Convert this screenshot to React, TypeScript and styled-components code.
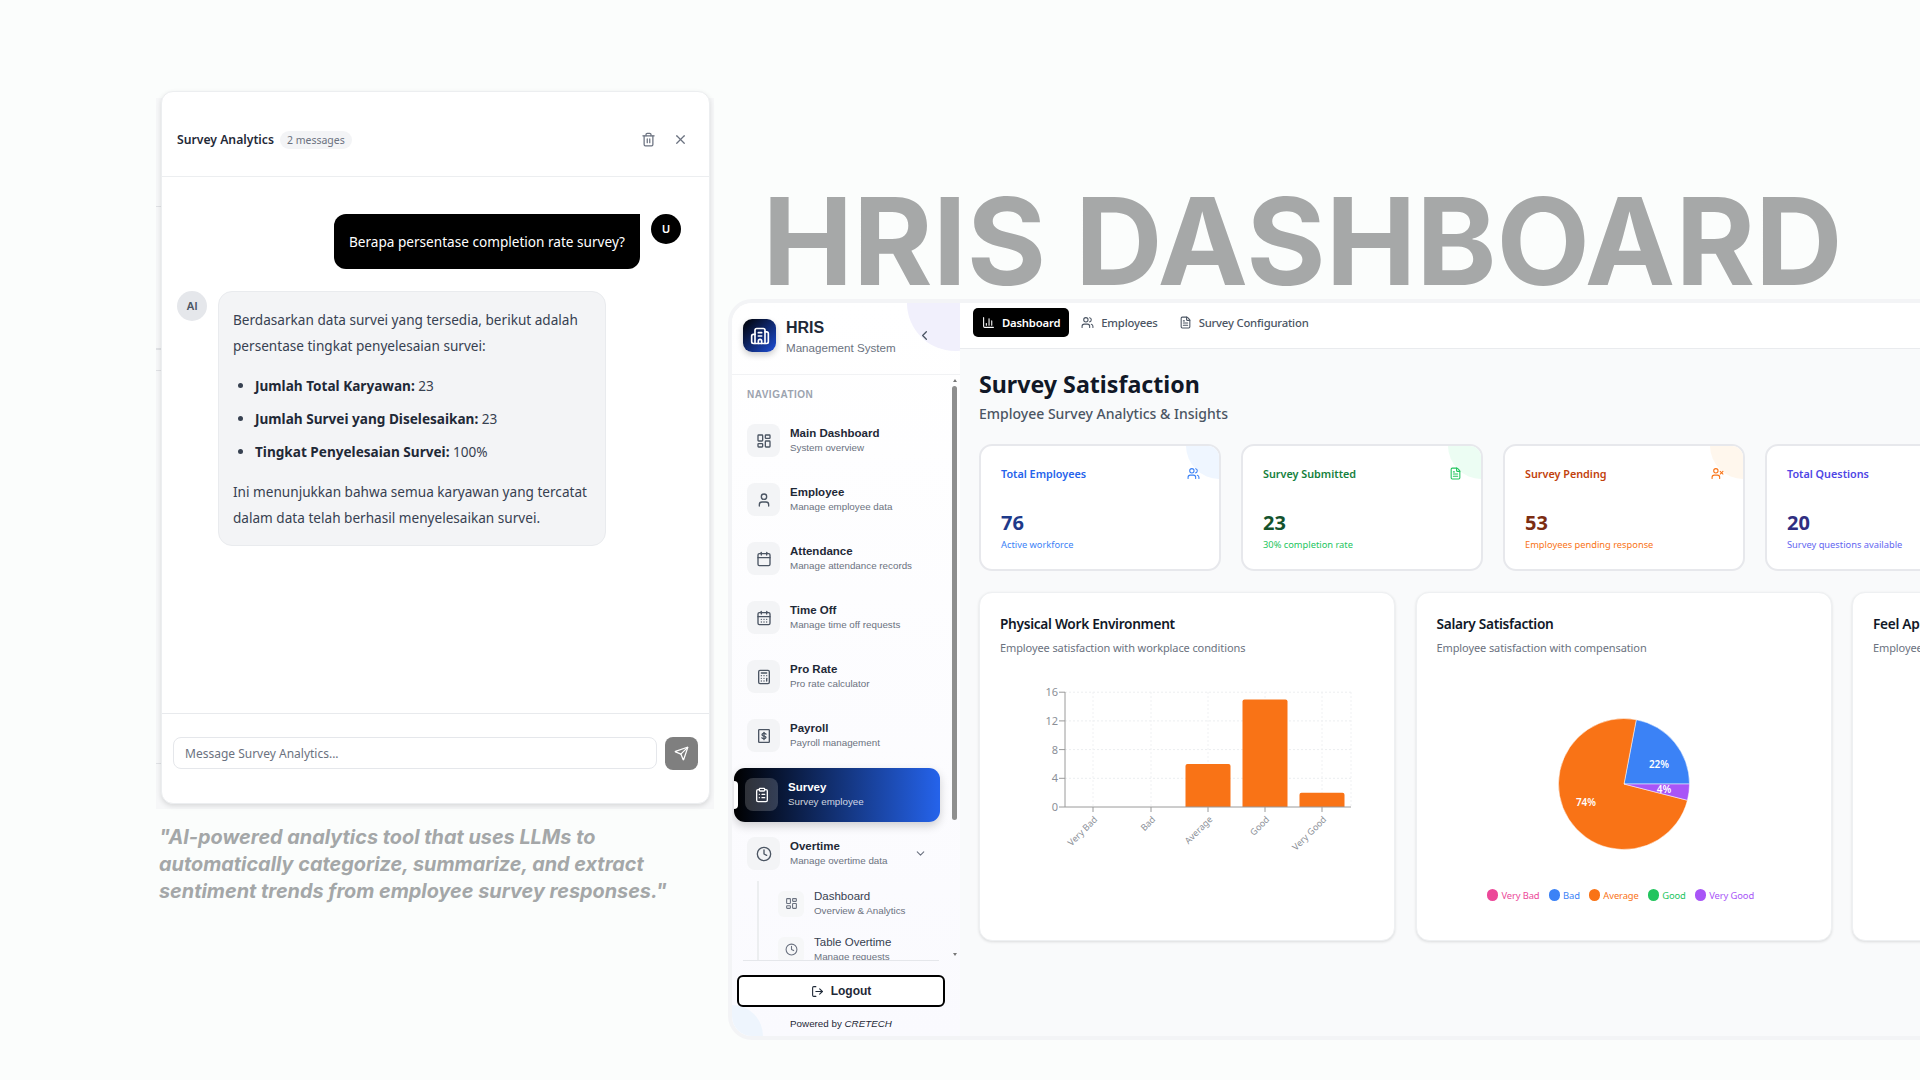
import React from "react";
import styled, { createGlobalStyle } from "styled-components";
import {
  ChartColumn, Users, FileText, UserX, Trash2, X, Send, LayoutDashboard, User, Calendar,
  CalendarDays, Calculator, ClipboardList, Clock, ChevronDown, ChevronLeft, LogOut, Building2,
} from "lucide-react";

const SEGOE = `"Noto Sans", "Open Sans", sans-serif`;
const ARIAL = `"Liberation Sans", Arial, sans-serif`;

const Global = createGlobalStyle`
  html, body { margin: 0; padding: 0; background: #fbfdfc; }
  * { box-sizing: border-box; }
`;

const Page = styled.div`
  width: 1920px;
  height: 1080px;
  overflow: hidden;
  background: #fbfdfc;
  display: flex;
  align-items: flex-start;
  padding-left: 161px;
  font-family: ${SEGOE};
`;

const LeftColumn = styled.div`
  width: 549px;
  flex: none;
  margin-top: 91px;
  display: flex;
  flex-direction: column;
`;

const ChatStage = styled.div`
  position: relative;
  &::before {
    content: "";
    position: absolute;
    left: -5px;
    right: -4px;
    top: 7px;
    bottom: -5px;
    background:
      linear-gradient(#dfe1e4, #dfe1e4) 0 108px / 6px 1px no-repeat,
      linear-gradient(#dfe1e4, #dfe1e4) 0 250px / 6px 2px no-repeat,
      linear-gradient(#dfe1e4, #dfe1e4) 0 272px / 6px 1px no-repeat,
      linear-gradient(#dfe1e4, #dfe1e4) 0 665px / 6px 1px no-repeat,
      #f6f7f8;
  }
`;

const ChatCard = styled.div`
  position: relative;
  height: 713px;
  background: #fff;
  border: 1px solid #eceef0;
  border-radius: 12px;
  box-shadow: 0 2px 5px rgba(0, 0, 0, 0.12);
  display: flex;
  flex-direction: column;
`;

const ChatHeader = styled.div`
  height: 85px;
  flex: none;
  padding: 11px 15px 0;
  display: flex;
  align-items: center;
  border-bottom: 1px solid #eceef0;
`;

const ChatTitle = styled.div`
  font-size: 12.2px;
  font-weight: 600;
  color: #1f2937;
`;

const CountBadge = styled.div`
  margin-left: 6px;
  height: 18px;
  padding: 0 7px;
  border-radius: 9px;
  background: #f3f4f6;
  color: #6b7280;
  font-size: 10.5px;
  display: flex;
  align-items: center;
`;

const HeaderActions = styled.div`
  margin-left: auto;
  margin-right: 6px;
  display: flex;
  gap: 17px;
  color: #6b7280;
`;

const Messages = styled.div`
  flex: 1;
  padding: 37px 28px 0 15px;
  display: flex;
  flex-direction: column;
  gap: 22px;
`;

const UserRow = styled.div`
  display: flex;
  justify-content: flex-end;
  gap: 11px;
`;

const UserBubble = styled.div`
  width: 306px;
  height: 55px;
  background: #000;
  color: #fff;
  border-radius: 12px 0 12px 12px;
  font-size: 13.6px;
  display: flex;
  align-items: center;
  justify-content: center;
  white-space: nowrap;
`;

const Avatar = styled.div<{ $dark?: boolean }>`
  width: 30px;
  height: 30px;
  flex: none;
  border-radius: 50%;
  background: ${(p) => (p.$dark ? "#000" : "#e5e7eb")};
  color: ${(p) => (p.$dark ? "#fff" : "#4b5563")};
  font-family: Inter, sans-serif;
  font-size: 11px;
  font-weight: 600;
  display: flex;
  align-items: center;
  justify-content: center;
`;

const AiRow = styled.div`
  display: flex;
  gap: 11px;
`;

const AiBubble = styled.div`
  width: 388px;
  height: 255px;
  background: #f3f4f6;
  border: 1px solid #e9ebee;
  border-radius: 14px;
  padding: 15px 14px 0;
  color: #374151;
  font-size: 13.6px;
  line-height: 26px;
`;

const Para = styled.p`
  margin: 0;
`;

const BulletList = styled.ul`
  margin: 14px 0 14px;
  padding: 0 0 0 22px;
`;

const Bullet = styled.li`
  margin-bottom: 7px;
  &:last-child { margin-bottom: 0; }
  & > strong { color: #1f2937; font-weight: 700; }
`;

const Composer = styled.div`
  height: 90px;
  flex: none;
  padding: 23px 11px 0;
  border-top: 1px solid #e8eaed;
  display: flex;
  align-items: flex-start;
  gap: 8px;
`;

const MessageInput = styled.div`
  flex: 1;
  height: 32px;
  border: 1px solid #e5e7eb;
  border-radius: 8px;
  padding-left: 11px;
  color: #6b7280;
  font-size: 12px;
  display: flex;
  align-items: center;
`;

const SendButton = styled.div`
  width: 33px;
  height: 33px;
  background: #7f7f7f;
  border-radius: 8px;
  color: #fff;
  display: flex;
  align-items: center;
  justify-content: center;
`;

const Quote = styled.div`
  margin: 20px 0 0 -2px;
  font-family: Inter, sans-serif;
  font-size: 19.85px;
  font-weight: 700;
  font-style: italic;
  line-height: 27px;
  color: #a4a7a8;
  white-space: nowrap;
`;

const RightColumn = styled.div`
  flex: none;
  width: 1240px;
  margin: 183px 0 0 18px;
`;

const BigTitle = styled.h1`
  margin: 0 0 0 34.5px;
  height: 116px;
  font-family: Inter, sans-serif;
  font-size: 121.3px;
  line-height: 116px;
  font-weight: 700;
  color: #a6a8a8;
  white-space: nowrap;
`;

const Window = styled.div`
  height: 741px;
  border: 4px solid #f3f4f6;
  border-right: 0;
  border-radius: 24px 0 0 24px;
  display: flex;
  overflow: hidden;
  background: #fff;
`;

const Sidebar = styled.aside`
  position: relative;
  width: 228px;
  flex: none;
  display: flex;
  flex-direction: column;
  overflow: hidden;
  font-family: ${ARIAL};
  background: linear-gradient(180deg, #fff, #fafafe);
  &::before {
    content: "";
    position: absolute;
    left: 175px;
    top: -48px;
    width: 96px;
    height: 96px;
    border-radius: 50%;
    background: #f1f0fc;
  }
  &::after {
    content: "";
    position: absolute;
    left: -31px;
    bottom: -31px;
    width: 62px;
    height: 62px;
    border-radius: 50%;
    background: #eef5fd;
  }
`;

const Brand = styled.div`
  position: relative;
  z-index: 1;
  height: 72px;
  flex: none;
  padding: 16px 0 0 11px;
  display: flex;
  border-bottom: 1px solid #f1f2f4;
`;

const Logo = styled.div`
  width: 33px;
  height: 33px;
  border-radius: 9px;
  background: linear-gradient(135deg, #000, #1d4ed8);
  color: #fff;
  box-shadow: 0 3px 6px rgba(0, 0, 0, 0.2);
  display: flex;
  align-items: center;
  justify-content: center;
`;

const BrandText = styled.div`
  margin-left: 10px;
  padding-top: 1px;
`;

const BrandName = styled.div`
  font-size: 16px;
  line-height: 16px;
  font-weight: 700;
  color: #1f2937;
`;

const BrandSub = styled.div`
  margin-top: 4px;
  font-size: 11.6px;
  line-height: 16px;
  color: #6b7280;
`;

const Collapse = styled.div`
  position: absolute;
  left: 185px;
  top: 25px;
  color: #4b5563;
  display: flex;
`;

const NavScroll = styled.div`
  position: relative;
  z-index: 1;
  height: 585px;
  flex: none;
  overflow: hidden;
  padding-top: 13px;
  display: flex;
  flex-direction: column;
`;

const NavLabel = styled.div`
  flex: none;
  height: 13px;
  margin: 0 0 10px 15px;
  font-size: 10px;
  line-height: 13px;
  font-weight: 700;
  letter-spacing: 0.5px;
  color: #9ca3af;
`;

const NavItem = styled.div<{ $active?: boolean }>`
  position: relative;
  flex: none;
  height: 54px;
  margin: 2.5px 20px 2.5px 2px;
  padding-left: ${(p) => (p.$active ? "11px" : "13px")};
  border-radius: ${(p) => (p.$active ? "11px" : "0")};
  display: flex;
  align-items: center;
  gap: 10px;
  background: ${(p) => (p.$active ? "linear-gradient(90deg, #000, #2563eb)" : "transparent")};
  box-shadow: ${(p) => (p.$active ? "0 4px 10px rgba(0, 0, 0, 0.18)" : "none")};
  ${(p) =>
    p.$active
      ? `&::before {
          content: "";
          position: absolute;
          left: 0;
          top: 13px;
          width: 4px;
          height: 28px;
          background: #fff;
          border-radius: 0 4px 4px 0;
        }`
      : ""}
`;

const NavIconBox = styled.div<{ $active?: boolean }>`
  width: 33px;
  height: 33px;
  flex: none;
  border-radius: 8px;
  background: ${(p) => (p.$active ? "rgba(255,255,255,0.18)" : "#f3f4f6")};
  color: ${(p) => (p.$active ? "#fff" : "#4b5563")};
  display: flex;
  align-items: center;
  justify-content: center;
`;

const NavTitle = styled.div<{ $active?: boolean }>`
  font-size: 11.5px;
  line-height: 14.5px;
  font-weight: 700;
  color: ${(p) => (p.$active ? "#fff" : "#1f2937")};
`;

const NavSub = styled.div<{ $active?: boolean }>`
  font-size: 9.8px;
  line-height: 14px;
  color: ${(p) => (p.$active ? "rgba(255,255,255,0.8)" : "#6b7280")};
`;

const NavChevron = styled.div`
  margin-left: auto;
  margin-right: 13px;
  color: #6b7280;
  display: flex;
`;

const SubList = styled.div`
  flex: none;
  margin: -2.5px 0 0 25px;
  padding-left: 19px;
  border-left: 2px solid #eceef0;
`;

const SubItem = styled.div`
  height: 46px;
  display: flex;
  align-items: center;
  gap: 10px;
`;

const SubIconBox = styled.div`
  width: 26px;
  height: 26px;
  flex: none;
  border-radius: 6px;
  background: #f6f7f8;
  color: #6b7280;
  display: flex;
  align-items: center;
  justify-content: center;
`;

const SubTitle = styled.div`
  font-size: 11.5px;
  line-height: 14.5px;
  color: #374151;
`;

const ScrollThumb = styled.div`
  position: absolute;
  z-index: 2;
  right: 3px;
  top: 83px;
  width: 5px;
  height: 434px;
  border-radius: 3px;
  background: #8f8f8f;
`;

const ScrollArrow = styled.div<{ $down?: boolean }>`
  position: absolute;
  z-index: 2;
  right: 3.5px;
  top: ${(p) => (p.$down ? "650px" : "76px")};
  width: 0;
  height: 0;
  border-left: 2px solid transparent;
  border-right: 2px solid transparent;
  ${(p) => (p.$down ? "border-top: 3px solid #777;" : "border-bottom: 3px solid #777;")}
`;

const SideFooter = styled.div`
  position: relative;
  z-index: 1;
  flex: 1;
  padding: 15px 0 0 5px;
  &::before {
    content: "";
    position: absolute;
    left: 11px;
    top: 0;
    width: 196px;
    height: 1px;
    background: #e5e7eb;
  }
`;

const LogoutButton = styled.div`
  width: 208px;
  height: 32px;
  background: #fff;
  border: 2px solid #000;
  border-radius: 6px;
  color: #1f2937;
  font-size: 12px;
  font-weight: 700;
  display: flex;
  align-items: center;
  justify-content: center;
  gap: 7px;
`;

const Powered = styled.div`
  width: 208px;
  margin-top: 10px;
  text-align: center;
  font-size: 9.8px;
  line-height: 14px;
  color: #1f2937;
  & > em { font-weight: 400; }
`;

const Main = styled.main`
  flex: 1;
  min-width: 0;
  display: flex;
  flex-direction: column;
  background: #f9fafb;
`;

const TabBar = styled.nav`
  height: 46px;
  flex: none;
  background: #fff;
  border-bottom: 1px solid #e9ebee;
  padding: 5px 0 0 13px;
  display: flex;
  align-items: flex-start;
  gap: 3px;
`;

const Tab = styled.div<{ $active?: boolean }>`
  height: 29px;
  padding: 0 9px;
  border-radius: 5px;
  background: ${(p) => (p.$active ? "#000" : "transparent")};
  color: ${(p) => (p.$active ? "#fff" : "#4b5563")};
  font-size: 11.3px;
  letter-spacing: -0.2px;
  font-weight: ${(p) => (p.$active ? 600 : 500)};
  display: flex;
  align-items: center;
  gap: 7px;
`;

const Content = styled.div`
  padding: 19px 0 0 19px;
`;

const PageTitle = styled.h2`
  margin: 0;
  font-size: 23.2px;
  line-height: 32px;
  font-weight: 700;
  color: #111827;
`;

const PageSub = styled.div`
  margin-top: 4px;
  font-size: 14px;
  line-height: 20px;
  font-weight: 500;
  color: #4b5563;
`;

const StatRow = styled.div`
  margin-top: 20px;
  display: flex;
  gap: 20px;
`;

const StatCard = styled.div<{ $tint: string }>`
  position: relative;
  width: 242px;
  height: 127px;
  flex: none;
  background: #fff;
  border: 2px solid #e7e8ec;
  border-radius: 13px;
  padding: 18px 19px 0 20px;
  overflow: hidden;
  &::before {
    content: "";
    position: absolute;
    right: -34px;
    top: -34px;
    width: 67px;
    height: 67px;
    border-radius: 50%;
    background: ${(p) => p.$tint};
  }
`;

const StatHead = styled.div`
  position: relative;
  display: flex;
  align-items: center;
  justify-content: space-between;
  height: 18px;
`;

const StatTitle = styled.div<{ $color: string }>`
  font-size: 10.8px;
  font-weight: 600;
  color: ${(p) => p.$color};
`;

const StatValue = styled.div<{ $color: string }>`
  margin-top: 27px;
  font-size: 20px;
  line-height: 28px;
  font-weight: 700;
  color: ${(p) => p.$color};
`;

const StatNote = styled.div<{ $color: string }>`
  margin-top: 1px;
  font-size: 9.3px;
  line-height: 14px;
  color: ${(p) => p.$color};
`;

const ChartRow = styled.div`
  margin-top: 21px;
  display: flex;
  gap: 20.5px;
`;

const ChartCard = styled.div`
  width: 416px;
  height: 349px;
  flex: none;
  background: #fff;
  border: 1px solid #eef0f2;
  border-radius: 13px;
  box-shadow: 0 1px 3px rgba(0, 0, 0, 0.12);
  padding: 21px 0 0 20px;
`;

const ChartTitle = styled.div`
  font-size: 13.7px;
  letter-spacing: -0.3px;
  line-height: 20px;
  font-weight: 600;
  color: #111827;
  white-space: nowrap;
`;

const ChartSub = styled.div`
  margin-top: 6px;
  font-size: 11px;
  letter-spacing: -0.1px;
  line-height: 16px;
  color: #6b7280;
  white-space: nowrap;
`;

const ChartSvg = styled.svg`
  display: block;
  margin-top: 3px;
  font-family: ${SEGOE};
`;

const Legend = styled.div`
  margin-top: 8px;
  width: 368px;
  height: 16px;
  display: flex;
  justify-content: center;
  gap: 9px;
`;

const LegendItem = styled.div<{ $color: string }>`
  display: flex;
  align-items: center;
  gap: 3px;
  font-size: 9.4px;
  letter-spacing: -0.1px;
  color: ${(p) => p.$color};
  &::before {
    content: "";
    width: 11.5px;
    height: 11.5px;
    border-radius: 50%;
    background: ${(p) => p.$color};
  }
`;

const PayrollIcon = ({ size = 16 }: { size?: number }) => (
  <svg width={size} height={size} viewBox="0 0 24 24" fill="none" stroke="currentColor" strokeWidth="2" strokeLinecap="round" strokeLinejoin="round">
    <rect x="4" y="2.5" width="16" height="19" rx="1" />
    <path d="M12 6.5v11" />
    <path d="M15 9.2c-.6-.9-1.6-1.2-3-1.2-1.8 0-3 .8-3 2 0 2.8 6 1.3 6 4 0 1.2-1.2 2-3 2-1.4 0-2.5-.4-3.1-1.3" />
  </svg>
);

const navItems = [
  { icon: <LayoutDashboard size={16} />, title: "Main Dashboard", sub: "System overview" },
  { icon: <User size={16} />, title: "Employee", sub: "Manage employee data" },
  { icon: <Calendar size={16} />, title: "Attendance", sub: "Manage attendance records" },
  { icon: <CalendarDays size={16} />, title: "Time Off", sub: "Manage time off requests" },
  { icon: <Calculator size={16} />, title: "Pro Rate", sub: "Pro rate calculator" },
  { icon: <PayrollIcon />, title: "Payroll", sub: "Payroll management" },
  { icon: <ClipboardList size={16} />, title: "Survey", sub: "Survey employee", active: true },
  { icon: <Clock size={16} />, title: "Overtime", sub: "Manage overtime data", chevron: true },
];

const stats = [
  { title: "Total Employees", value: "76", note: "Active workforce", tint: "#eff6ff", c1: "#2563eb", c2: "#1e3a8a", c3: "#3b82f6", icon: <Users size={13} color="#3b82f6" /> },
  { title: "Survey Submitted", value: "23", note: "30% completion rate", tint: "#ecfdf3", c1: "#15803d", c2: "#14532d", c3: "#22c55e", icon: <FileText size={13} color="#22c55e" /> },
  { title: "Survey Pending", value: "53", note: "Employees pending response", tint: "#fff7ed", c1: "#c2410c", c2: "#7c2d12", c3: "#f97316", icon: <UserX size={13} color="#f97316" /> },
  { title: "Total Questions", value: "20", note: "Survey questions available", tint: "#eef2ff", c1: "#4f46e5", c2: "#312e81", c3: "#6366f1", icon: <FileText size={13} color="#6366f1" /> },
];

const bars = [
  { label: "Very Bad", x: 93, value: 0 },
  { label: "Bad", x: 151, value: 0 },
  { label: "Average", x: 208, value: 6 },
  { label: "Good", x: 265, value: 15 },
  { label: "Very Good", x: 322, value: 2 },
];

const AXIS_X = 65;
const AXIS_Y = 148;
const UNIT = 28.7 / 4;

const BarChart = () => (
  <ChartSvg width="376" height="220" viewBox="0 0 376 220">
    {[0, 4, 8, 12, 16].map((t) => {
      const y = AXIS_Y - t * UNIT;
      return (
        <g key={t}>
          {t > 0 && <line x1={AXIS_X} x2={351} y1={y} y2={y} stroke="#eceef0" strokeDasharray="2 2" />}
          <line x1={AXIS_X - 6} x2={AXIS_X} y1={y} y2={y} stroke="#9a9a9a" />
          <text x={AXIS_X - 7} y={y + 4} textAnchor="end" fontSize="11" fill="#8b8f97">{t}</text>
        </g>
      );
    })}
    {[...bars.map((b) => b.x), 351].map((x) => (
      <line key={x} x1={x} x2={x} y1={33} y2={AXIS_Y} stroke="#f0f1f3" strokeDasharray="2 2" />
    ))}
    {bars.map((b) => {
      const h = b.value * UNIT;
      return (
        <g key={b.label}>
          {b.value > 0 && (
            <path
              d={`M${b.x - 22.5} ${AXIS_Y} V${AXIS_Y - h + 2} Q${b.x - 22.5} ${AXIS_Y - h} ${b.x - 20.5} ${AXIS_Y - h} H${b.x + 20.5} Q${b.x + 22.5} ${AXIS_Y - h} ${b.x + 22.5} ${AXIS_Y - h + 2} V${AXIS_Y} Z`}
              fill="#f97316"
            />
          )}
          <line x1={b.x} x2={b.x} y1={AXIS_Y} y2={AXIS_Y + 5} stroke="#9a9a9a" />
          <text
            x={b.x + 5}
            y={AXIS_Y + 13}
            textAnchor="end"
            fontSize="9"
            fill="#8b8f97"
            transform={`rotate(-45 ${b.x + 5} ${AXIS_Y + 13})`}
          >
            {b.label}
          </text>
        </g>
      );
    })}
    <line x1={AXIS_X} x2={AXIS_X} y1={33} y2={AXIS_Y} stroke="#9a9a9a" />
    <line x1={AXIS_X} x2={351} y1={AXIS_Y} y2={AXIS_Y} stroke="#9a9a9a" />
  </ChartSvg>
);

const polar = (cx: number, cy: number, r: number, deg: number) => {
  const a = (deg * Math.PI) / 180;
  return [cx + r * Math.cos(a), cy - r * Math.sin(a)];
};

const slice = (cx: number, cy: number, r: number, from: number, to: number) => {
  const [x1, y1] = polar(cx, cy, r, from);
  const [x2, y2] = polar(cx, cy, r, to);
  return `M${cx} ${cy} L${x1} ${y1} A${r} ${r} 0 ${to - from > 180 ? 1 : 0} 0 ${x2} ${y2} Z`;
};

const PieChart = () => {
  const cx = 187;
  const cy = 125;
  const r = 65.5;
  return (
    <ChartSvg width="376" height="220" viewBox="0 0 376 220">
      <path d={slice(cx, cy, r, 0, 79.2)} fill="#3b82f6" stroke="#fff" strokeWidth="0.5" />
      <path d={slice(cx, cy, r, 79.2, 345.6)} fill="#f97316" stroke="#fff" strokeWidth="0.5" />
      <path d={slice(cx, cy, r, 345.6, 360)} fill="#a855f7" stroke="#fff" strokeWidth="0.5" />
      <g fill="#fff" fontSize="10" fontWeight="600" textAnchor="middle">
        <text x={222} y={109}>22%</text>
        <text x={227} y={134}>4%</text>
        <text x={149} y={147}>74%</text>
      </g>
    </ChartSvg>
  );
};

const legend = [
  { label: "Very Bad", color: "#ec4899" },
  { label: "Bad", color: "#3b82f6" },
  { label: "Average", color: "#f97316" },
  { label: "Good", color: "#22c55e" },
  { label: "Very Good", color: "#a855f7" },
];

export default function App() {
  return (
    <Page>
      <Global />
      <LeftColumn>
        <ChatStage>
          <ChatCard>
            <ChatHeader>
              <ChatTitle>Survey Analytics</ChatTitle>
              <CountBadge>2 messages</CountBadge>
              <HeaderActions>
                <Trash2 size={15} />
                <X size={15} />
              </HeaderActions>
            </ChatHeader>
            <Messages>
              <UserRow>
                <UserBubble>Berapa persentase completion rate survey?</UserBubble>
                <Avatar $dark>U</Avatar>
              </UserRow>
              <AiRow>
                <Avatar>AI</Avatar>
                <AiBubble>
                  <Para>Berdasarkan data survei yang tersedia, berikut adalah persentase tingkat penyelesaian survei:</Para>
                  <BulletList>
                    <Bullet><strong>Jumlah Total Karyawan:</strong> 23</Bullet>
                    <Bullet><strong>Jumlah Survei yang Diselesaikan:</strong> 23</Bullet>
                    <Bullet><strong>Tingkat Penyelesaian Survei:</strong> 100%</Bullet>
                  </BulletList>
                  <Para>Ini menunjukkan bahwa semua karyawan yang tercatat dalam data telah berhasil menyelesaikan survei.</Para>
                </AiBubble>
              </AiRow>
            </Messages>
            <Composer>
              <MessageInput>Message Survey Analytics...</MessageInput>
              <SendButton><Send size={15} /></SendButton>
            </Composer>
          </ChatCard>
        </ChatStage>
        <Quote>
          "AI-powered analytics tool that uses LLMs to
          <br />
          automatically categorize, summarize, and extract
          <br />
          sentiment trends from employee survey responses."
        </Quote>
      </LeftColumn>
      <RightColumn>
        <BigTitle>HRIS DASHBOARD</BigTitle>
        <Window>
          <Sidebar>
            <Brand>
              <Logo><Building2 size={20} /></Logo>
              <BrandText>
                <BrandName>HRIS</BrandName>
                <BrandSub>Management System</BrandSub>
              </BrandText>
              <Collapse><ChevronLeft size={15} /></Collapse>
            </Brand>
            <NavScroll>
              <NavLabel>NAVIGATION</NavLabel>
              {navItems.map((n) => (
                <NavItem key={n.title} $active={n.active}>
                  <NavIconBox $active={n.active}>{n.icon}</NavIconBox>
                  <div>
                    <NavTitle $active={n.active}>{n.title}</NavTitle>
                    <NavSub $active={n.active}>{n.sub}</NavSub>
                  </div>
                  {n.chevron && <NavChevron><ChevronDown size={13} /></NavChevron>}
                </NavItem>
              ))}
              <SubList>
                <SubItem>
                  <SubIconBox><LayoutDashboard size={13} /></SubIconBox>
                  <div>
                    <SubTitle>Dashboard</SubTitle>
                    <NavSub>Overview &amp; Analytics</NavSub>
                  </div>
                </SubItem>
                <SubItem>
                  <SubIconBox><Clock size={13} /></SubIconBox>
                  <div>
                    <SubTitle>Table Overtime</SubTitle>
                    <NavSub>Manage requests</NavSub>
                  </div>
                </SubItem>
              </SubList>
            </NavScroll>
            <ScrollArrow />
            <ScrollThumb />
            <ScrollArrow $down />
            <SideFooter>
              <LogoutButton><LogOut size={13} />Logout</LogoutButton>
              <Powered>Powered by <em>CRETECH</em></Powered>
            </SideFooter>
          </Sidebar>
          <Main>
            <TabBar>
              <Tab $active><ChartColumn size={13} />Dashboard</Tab>
              <Tab><Users size={13} />Employees</Tab>
              <Tab><FileText size={13} />Survey Configuration</Tab>
            </TabBar>
            <Content>
              <PageTitle>Survey Satisfaction</PageTitle>
              <PageSub>Employee Survey Analytics &amp; Insights</PageSub>
              <StatRow>
                {stats.map((s) => (
                  <StatCard key={s.title} $tint={s.tint}>
                    <StatHead>
                      <StatTitle $color={s.c1}>{s.title}</StatTitle>
                      {s.icon}
                    </StatHead>
                    <StatValue $color={s.c2}>{s.value}</StatValue>
                    <StatNote $color={s.c3}>{s.note}</StatNote>
                  </StatCard>
                ))}
              </StatRow>
              <ChartRow>
                <ChartCard>
                  <ChartTitle>Physical Work Environment</ChartTitle>
                  <ChartSub>Employee satisfaction with workplace conditions</ChartSub>
                  <BarChart />
                </ChartCard>
                <ChartCard>
                  <ChartTitle>Salary Satisfaction</ChartTitle>
                  <ChartSub>Employee satisfaction with compensation</ChartSub>
                  <PieChart />
                  <Legend>
                    {legend.map((l) => (
                      <LegendItem key={l.label} $color={l.color}>{l.label}</LegendItem>
                    ))}
                  </Legend>
                </ChartCard>
                <ChartCard>
                  <ChartTitle>Feel Appreciated</ChartTitle>
                  <ChartSub>Employee feeling of appreciation</ChartSub>
                </ChartCard>
              </ChartRow>
            </Content>
          </Main>
        </Window>
      </RightColumn>
    </Page>
  );
}
